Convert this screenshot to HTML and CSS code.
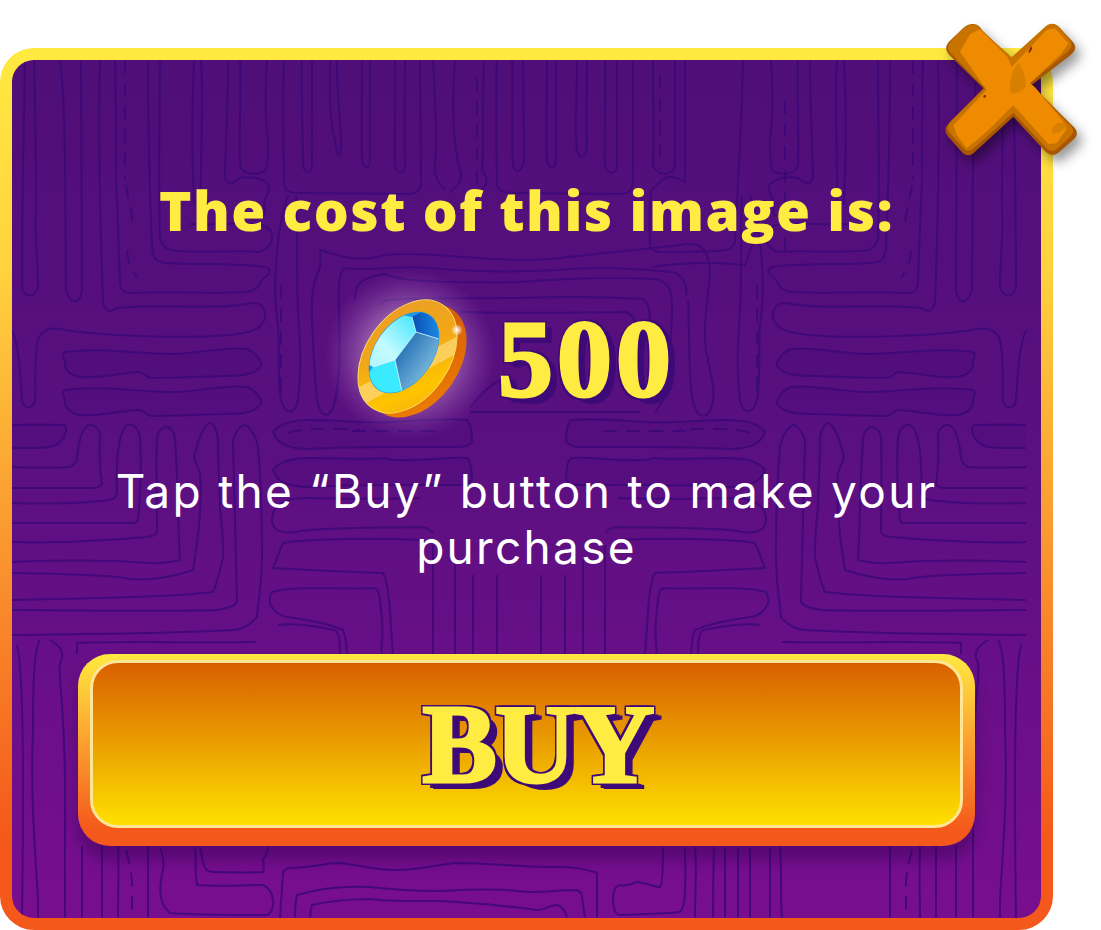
FILE: index.html
```html
<!DOCTYPE html>
<html lang="en">
    <head>
        <meta charset="UTF-8">
        <title>Buy image</title>
        <link rel="stylesheet" href="styles.css">
    </head>
    <body>
        <div class="panel">
            <div class="panel-inner">
                <!-- maze texture behind the content -->
                <svg class="maze" viewBox="12 60 1029 858" aria-hidden="true">
                    <defs>
                        <g id="mazeSide">
                            <path d="M25 60C24 120 22 200 22 285C22 299 37 299 38 285C38 260 34 230 36 210C36 170 35 100 34 60"/>
                            <path d="M60 60C66 100 65 200 66 290C70 305 80 305 82 290L81 60"/>
                            <path d="M100 60C98 130 100 220 103 303C106 313 112 312 117 308C160 303 210 311 253 303C265 302 268 318 263 322C258 331 250 332 230 335C180 339 100 336 60 329C45 326 38 335 37 345C34 365 36 385 35 400C33 410 24 410 22 400C20 375 20 350 12 330"/>
                            <path d="M148 60C148 130 150 200 152 247C153 258 156 262 165 263C200 265 240 263 265 267C272 269 271 274 264 278C258 282 262 290 245 292C210 294 170 291 130 293C122 293 120 288 120 280C118 240 118 210 116 183C116 130 116 90 115 60"/>
                            <path class="dash" d="M125 60V180M126 185C128 200 132 210 133 225M127 250C128 265 132 270 137 278"/>
                            <path d="M160 60C160 120 158 180 160 237C162 248 168 251 180 251C210 253 240 250 258 252C270 250 274 240 271 232C268 226 262 224 250 224C230 222 210 226 190 224"/>
                            <path d="M194 60C192 100 192 160 194 205M201 60C204 100 200 160 201 205"/>
                            <path d="M228 60C228 100 226 140 225 175C225 185 232 185 240 178C250 176 262 178 268 184C272 190 264 198 264 204C264 210 268 212 262 216"/>
                            <path d="M240 60C241 100 239 140 240 165C242 175 258 176 266 170C268 160 269 145 267 130C264 100 266 80 267 60"/>

                            <path class="shape" d="M65 352C100 347 140 354 175 354C200 353 230 346 247 349C255 352 262 360 261 366C255 374 245 376 225 376C195 377 170 378 152 378C145 378 145 372 138 372C115 374 95 379 80 377C68 375 64 368 65 362C62 356 63 353 65 352Z"/>
                            <path class="shape" d="M65 390C100 385 140 392 175 392C200 391 230 384 247 387C255 390 262 398 261 404C255 412 245 414 225 414C195 415 170 416 152 416C145 416 145 410 138 410C115 412 95 417 80 415C68 413 64 406 65 400C62 394 63 391 65 390Z"/>

                            <path d="M288 195C276 230 272 290 278 325C280 350 277 380 281 400C285 415 295 415 298 400C302 370 300 340 298 310C296 270 298 240 296 195"/>
                            <path class="dash" d="M281 285V400"/>
                            <path class="shape" d="M273 432C278 425 290 420 310 420C340 420 370 424 393 422C420 420 450 418 467 420C472 425 472 436 472 442C468 446 465 447 455 447C400 447 350 446 310 449C290 449 277 445 273 432Z"/>
                            <path class="shape" d="M273 470C278 463 290 458 310 458C340 458 370 460 385 458C395 464 450 456 467 458C472 463 472 474 472 480C468 484 465 485 455 485C400 485 350 484 310 487C290 487 277 483 273 470Z"/>
                            <path d="M272 520C272 508 280 500 300 498C340 498 380 500 420 498M272 520C272 528 278 534 295 532C320 527 380 528 420 527C428 527 430 530 433 533"/>
                            <path class="dash" d="M288 433C300 428 340 428 360 430M352 431H440"/>
                            <path d="M283 543C300 540 360 537 420 540M283 543C278 555 276 560 273 568C310 570 350 572 383 573C390 585 390 620 393 654"/>
                            <path d="M272 592C300 585 340 590 375 588C380 590 380 600 382 620C384 640 380 650 382 654M272 592C268 600 270 605 272 607C276 614 282 616 287 617C310 620 330 624 343 630C347 640 346 645 347 654"/>
                            <path d="M278 625C300 622 322 628 335 630C340 634 340 645 340 654"/>
                            <path d="M433 545V654M455 560V654M473 575V654M497 575V654"/>

                            <path class="shape" d="M12 425C40 424 50 425 64 425C68 428 66 436 60 442C54 448 46 448 30 448C24 448 18 448 12 448"/>
                            <path d="M12 467C30 468 60 468 70 467C76 464 77 460 77 457C78 445 82 425 90 425C96 424 101 432 100 437C99 460 100 472 102 483C102 486 98 488 93 488L12 488"/>
                            <path d="M12 503C40 504 70 504 100 501C112 500 117 500 117 490C116 470 117 430 128 425C135 423 140 432 140 440C142 470 140 500 138 520C136 524 134 523 130 523L12 523"/>
                            <path d="M12 542C60 544 110 540 147 537C155 536 157 534 157 530C157 500 156 460 157 437C159 428 165 427 167 427C172 428 175 434 175 440C178 480 178 530 180 560C170 562 160 564 150 563C110 560 60 560 12 562"/>
                            <path d="M12 573C60 574 100 574 125 578C140 582 170 578 193 570C198 540 202 500 200 473C198 465 192 460 195 453C198 440 204 424 210 423C214 424 218 432 218 440C218 470 220 490 220 507C222 530 224 545 223 557C220 572 216 585 213 592C170 598 80 598 12 600"/>
                            <path d="M12 610C80 610 150 612 217 610C228 608 237 606 237 600C236 550 234 490 233 440C236 432 240 425 245 425C252 428 256 438 258 447C262 490 262 530 262 557C262 580 258 605 257 617C250 626 240 630 233 630C160 634 80 634 12 635"/>
                            <path d="M77 654V643C120 641 200 643 256 642"/>
                            <path d="M40 640C34 650 33 680 33 730C30 800 36 860 38 900L38 918M50 640C58 645 64 650 62 658C58 665 60 670 60 680C62 700 66 760 65 810L65 918"/>
                            <path d="M17 645C24 670 24 780 22 918"/>
                            <path d="M82 846V918M102 846V918M118 846C119 870 118 900 118 918M148 846V918"/>
                            <path class="dash" d="M126 850C130 865 133 880 132 890V918"/>
                        </g>
                    </defs>

                    <use href="#mazeSide"/>
                    <use href="#mazeSide" transform="translate(1038) scale(-1 1)"/>

                    <path d="M284 60C282 110 284 160 284 185C286 192 292 193 300 193L410 194C418 193 421 190 421 180L420 60"/>
                    <path d="M302 60C301 100 303 140 303 165C305 175 311 175 312 165L312 60M330 60C330 90 329 120 335 140C337 160 341 160 341 145C341 120 336 90 337 60M362 60C362 100 361 140 362 160C364 170 369 170 370 160L370 60M395 60C396 100 394 140 395 165C397 175 405 175 405 165C404 130 405 90 405 60"/>
                    <path d="M433 60C436 110 437 140 435 165C433 175 440 185 445 190M455 60C452 100 452 140 460 170C464 180 458 185 450 192M484 60C482 110 484 150 482 170C490 180 486 185 482 190"/>
                    <path class="dash" d="M477 78V190"/>
                    <path d="M497 60C495 110 497 160 497 185C499 192 505 193 515 193L620 194C630 193 633 190 633 180L633 60"/>
                    <path d="M512 60C513 100 511 140 513 165C515 175 523 172 524 160L523 60M547 60C547 100 546 140 547 160C549 170 555 170 556 160L556 60M577 60C577 100 574 130 577 150C579 160 586 160 587 145C586 120 587 90 587 60M605 60C606 100 604 140 605 165C607 175 617 175 617 165L617 60"/>
                    <path d="M653 60C653 100 654 140 653 165C655 175 673 178 675 165L675 60M685 60L685 182C678 178 670 176 665 178C660 182 655 186 652 190C648 200 650 230 650 246C652 250 656 252 660 252C690 252 710 252 727 250C732 248 735 244 735 240C738 180 742 120 743 60"/>
                    <path d="M653 267C680 262 720 262 745 265C752 250 758 220 765 200"/>
                    <path class="dash" d="M660 75V170M785 100V250"/>

                    <path d="M320 250C345 258 360 262 385 255C430 250 500 265 560 258C610 252 660 248 687 244C702 243 708 250 710 270C710 290 702 320 706 350C712 380 716 395 712 405C708 420 698 420 693 402C688 380 690 340 688 300"/>
                    <path d="M320 250C320 260 322 265 318 272C312 285 311 300 312 320C314 350 314 385 318 405C322 418 330 418 334 405C340 385 340 350 339 310C338 280 340 270 345 268C370 272 400 265 430 268C470 272 520 272 560 270C600 265 650 270 672 272C680 274 688 282 686 295"/>
                    <path d="M355 300C355 285 358 278 385 274C400 282 450 283 520 282C570 278 620 277 655 279C668 281 672 290 672 305C672 340 668 360 668 385C665 400 660 405 655 412"/>
                    <path d="M380 305C380 298 400 298 520 298C570 296 610 297 643 299C650 304 650 315 650 330"/>
                    <path d="M460 312C520 314 580 312 627 312C635 316 636 325 636 335"/>
                    <path d="M470 408C480 395 490 385 500 380M470 412L640 412"/>

                    <path d="M280 918L283 873C284 870 287 868 290 868C310 868 325 863 340 863C360 865 375 870 397 870C420 870 440 864 457 863C490 863 530 868 563 867C575 867 590 870 597 873L597 918"/>
                    <path d="M295 918C295 905 296 900 297 895C320 888 345 886 370 887C395 890 415 891 437 891C465 890 490 888 517 891C540 894 555 890 577 890C581 892 582 895 582 897L585 918"/>
                    <path d="M310 918C310 912 311 908 312 905C330 901 350 899 370 899C395 902 415 901 437 901C470 902 505 906 537 910C545 910 550 905 557 905C562 906 566 912 567 918"/>
                    <path d="M613 900C613 892 615 886 620 885C627 887 630 884 637 882C645 882 652 887 660 887C663 885 663 860 663 847"/>
                    <path d="M613 900C614 910 615 915 620 915C640 914 660 914 680 912C684 908 685 900 685 890C686 875 685 865 685 847"/>
                    <path d="M695 918C695 890 697 870 695 847M713 918C713 890 713 880 714 847M725 918V847M738 918V847M750 918V847M770 918V847M782 918C780 890 782 870 780 847"/>
                    <path d="M160 847C162 855 165 860 163 870C158 890 160 905 170 913C200 915 240 915 267 915C272 913 274 905 273 900C272 892 268 887 263 885C240 885 220 887 197 885C195 875 196 860 195 847"/>
                    <path d="M200 847C202 855 202 860 203 863C205 870 208 872 213 872C230 872 250 873 263 872C264 868 264 864 263 860C266 855 268 850 268 847"/>
                </svg>

                <div class="content">
                    <h1 class="title">The cost of this image is:</h1>

                    <div class="price">
                        <svg class="gem" viewBox="358 298 110 122" aria-hidden="true">
                            <defs>
                                <radialGradient id="glow">
                                    <stop offset="0" stop-color="#fff" stop-opacity=".75"/>
                                    <stop offset=".55" stop-color="#f0c8e8" stop-opacity=".35"/>
                                    <stop offset="1" stop-color="#c080d0" stop-opacity="0"/>
                                </radialGradient>
                                <radialGradient id="spark">
                                    <stop offset="0" stop-color="#fff"/>
                                    <stop offset="1" stop-color="#fff" stop-opacity="0"/>
                                </radialGradient>
                                <linearGradient id="rim" x1="1" y1="0" x2="0" y2="1">
                                    <stop offset="0" stop-color="#e89a28"/>
                                    <stop offset=".45" stop-color="#f2a818"/>
                                    <stop offset=".75" stop-color="#ffc400"/>
                                    <stop offset="1" stop-color="#f0a818"/>
                                </linearGradient>
                                <linearGradient id="edge" x1="0" y1="1" x2="1" y2="0">
                                    <stop offset="0" stop-color="#ee8200"/>
                                    <stop offset="1" stop-color="#d2520a"/>
                                </linearGradient>
                                <linearGradient id="facetLight" x1="1" y1="0" x2="0" y2="1">
                                    <stop offset="0" stop-color="#35e4ff"/>
                                    <stop offset=".6" stop-color="#c4fbff"/>
                                    <stop offset="1" stop-color="#a8f4ff"/>
                                </linearGradient>
                                <linearGradient id="facetDeep" x1="0" y1="0" x2="1" y2="1">
                                    <stop offset="0" stop-color="#0a58a8"/>
                                    <stop offset="1" stop-color="#a8e0f4"/>
                                </linearGradient>
                                <linearGradient id="facetTop" x1="0" y1="0" x2="1" y2="0">
                                    <stop offset="0" stop-color="#0a4cb0"/>
                                    <stop offset="1" stop-color="#1e96f0"/>
                                </linearGradient>
                                <clipPath id="gemClip">
                                    <ellipse cx="404" cy="352.500" rx="45" ry="28.700" transform="rotate(-55 404 352.500)"/>
                                </clipPath>
                                <clipPath id="faceClip">
                                    <ellipse cx="407.500" cy="356.500" rx="62.500" ry="41.700" transform="rotate(-55 407.500 356.500)"/>
                                </clipPath>
                            </defs>
                            <circle cx="410" cy="355" r="85" fill="url(#glow)"/>
                            <ellipse cx="417" cy="361" rx="62.500" ry="41.700" transform="rotate(-55 417 361)" fill="url(#edge)"/>
                            <ellipse cx="407.500" cy="356.500" rx="62.500" ry="41.700" transform="rotate(-55 407.500 356.500)" fill="url(#rim)" stroke="#ffdc60" stroke-width="1"/>
                            <g clip-path="url(#faceClip)">
                                <polygon points="350,392 470,330 470,346 350,412" fill="#fbd468" opacity=".85"/>
                            </g>
                            <ellipse cx="404" cy="352.500" rx="45.500" ry="29.200" transform="rotate(-55 404 352.500)" fill="#1c98e6"/>
                            <g clip-path="url(#gemClip)">
                                <polygon points="412,317 416,332 395,360 373,367 360,360 380,310" fill="url(#facetLight)"/>
                                <polygon points="412,317 425,310 445,320 439,339 416,332" fill="url(#facetTop)"/>
                                <polygon points="416,332 439,339 436,370 403,396 395,360" fill="url(#facetDeep)"/>
                                <polygon points="373,367 395,360 403,396 380,396 360,385" fill="#3aeaff"/>
                                <path d="M412 317L416 332L395 360L403 396M395 360L373 367M416 332L439 339" fill="none" stroke="#e4fbff" stroke-width=".8"/>
                            </g>
                            <circle cx="457" cy="330" r="6" fill="url(#spark)"/>
                        </svg>
                        <span class="amount">500</span>
                    </div>

                    <p class="hint">Tap the “Buy” button to make your purchase</p>

                    <button class="buy" type="button">
                        <span class="buy-face"><span class="buy-label">BUY</span></span>
                    </button>
                </div>
            </div>

            <svg class="close" viewBox="0 0 543 540" aria-label="Close">
                <path d="M155 72C172 70 180 80 188 92L275 178L378 80C395 66 410 72 422 86L458 125C470 140 468 150 452 165L335 255L465 385C476 402 470 412 452 426L415 458C398 470 385 464 372 450L280 350L165 455C148 472 135 468 122 452L85 410C72 392 74 382 90 366L190 265L88 165C74 148 76 136 90 122L130 84C140 76 146 73 155 72Z" fill="#a85600"/>
                <path d="M155 74C170 72 178 82 186 92L275 172L378 78C395 66 408 72 420 84L448 118C458 132 456 142 442 155L330 250L455 380C464 395 458 404 444 416L410 448C396 458 386 452 375 440L280 338L165 442C148 458 138 454 128 442L90 400C80 385 82 376 94 362L195 265L92 160C80 146 82 134 94 122L130 84C140 76 146 75 155 74Z" fill="#c87200"/>
                <path d="M150 102L180 88L262 170L275 200L380 90L405 85L445 130L425 160L330 250L345 262L430 365L440 388L410 430L385 432L280 316L275 320L200 395L140 445L110 405L100 375L200 270L120 155Z" fill="#ee8b00"/>
                <path d="M295 190C310 205 318 240 318 262C305 275 285 285 272 278C266 250 275 210 295 190Z" fill="#d97f00"/>
                <path d="M405 375C420 362 435 368 440 378C430 392 412 402 395 398C395 388 400 380 405 375Z" fill="#d97f00"/>
                <path d="M325 155L333 138L337 146L328 160Z" fill="#7a2f00"/>
                <circle cx="194" cy="289" r="4" fill="#7a2f00"/>
            </svg>
        </div>
    </body>
</html>
```

FILE: styles.css
```css
body {
    margin: 0;
    background: #fff;
    font-family: "Open Sans", "Liberation Sans", sans-serif;
}

.panel {
    position: relative;
    width: 1053px;
    margin-top: 48px;
    padding: 12px;
    box-sizing: border-box;
    border-radius: 34px;
    background: linear-gradient(#ffe940 0%, #ffd23e 25%, #f98c2c 62%, #f4581a 90%);
}

.panel-inner {
    position: relative;
    height: 858px;
    border-radius: 22px;
    overflow: hidden;
    background: linear-gradient(#4f0e78, #5a1080 45%, #780e8e);
}

.maze {
    position: absolute;
    top: 0;
    left: 0;
    width: 1029px;
    height: 858px;
    fill: none;
    stroke: #3a0878;
    stroke-opacity: .8;
    stroke-width: 2;
}

.maze .shape {
    fill: #3c0870;
    fill-opacity: .14;
}

.maze .dash {
    stroke-dasharray: 14 9;
}

.content {
    position: relative;
    display: flex;
    flex-direction: column;
    align-items: center;
    padding: 116px 66px 0;
}

.title {
    margin: 0 0 2px;
    font-size: 55px;
    font-weight: 800;
    line-height: 68px;
    letter-spacing: 1.5px;
    color: #ffec43;
}

.price {
    display: flex;
    align-items: center;
    gap: 30px;
    margin-top: 52px;
    padding-right: 20px;
}

.gem {
    width: 110px;
    height: 122px;
    overflow: visible;
}

.amount {
    font-family: "Liberation Serif", serif;
    font-size: 110px;
    font-weight: 700;
    line-height: 122px;
    letter-spacing: 4px;
    color: #ffec43;
    -webkit-text-stroke: 3px #ffec43;
    text-shadow: 3px 3px 0 #3d0a78, 5px 5px 0 #3d0a78, 8px 7px 0 #3d0a78, -3px 0 0 #3d0a78, 0 -3px 0 #3d0a78, 3px -3px 0 #3d0a78, -3px 3px 0 #3d0a78, 8px 3px 0 #3d0a78;
}

.hint {
    width: 850px;
    margin: 43px 0 0;
    font-family: "Inter", sans-serif;
    font-size: 46px;
    line-height: 56px;
    letter-spacing: 2.3px;
    text-align: center;
    color: #fff;
}

.buy {
    display: block;
    width: 897px;
    margin-top: 79px;
    padding: 6px 12px 18px;
    border: 0;
    border-radius: 32px;
    background: linear-gradient(#ffe940, #fb9a2e 50%, #f4581a 92%);
    box-shadow: 0 14px 14px rgba(45, 0, 80, .4);
}

.buy-face {
    display: flex;
    align-items: center;
    justify-content: center;
    height: 168px;
    box-sizing: border-box;
    padding-left: 22px;
    border: 3px solid #ffe596;
    border-radius: 28px;
    background: linear-gradient(#d96000, #ea9f00 50%, #ffe000);
}

.buy-label {
    font-family: "Liberation Serif", serif;
    font-size: 112px;
    font-weight: 700;
    line-height: 1;
    letter-spacing: -2px;
    color: #ffec43;
    -webkit-text-stroke: 3px #ffec43;
    text-shadow: 3px 0 0 #3d0a78, -3px 0 0 #3d0a78, 0 3px 0 #3d0a78, 0 -3px 0 #3d0a78, 3px 3px 0 #3d0a78, -3px -3px 0 #3d0a78, 3px -3px 0 #3d0a78, -3px 3px 0 #3d0a78, 6px 6px 0 #3d0a78, 9px 7px 0 #3d0a78;
}

.close {
    position: absolute;
    top: -48px;
    left: 920px;
    width: 181px;
    height: 180px;
    filter: drop-shadow(5px 7px 6px rgba(0, 0, 0, .4));
}
```
